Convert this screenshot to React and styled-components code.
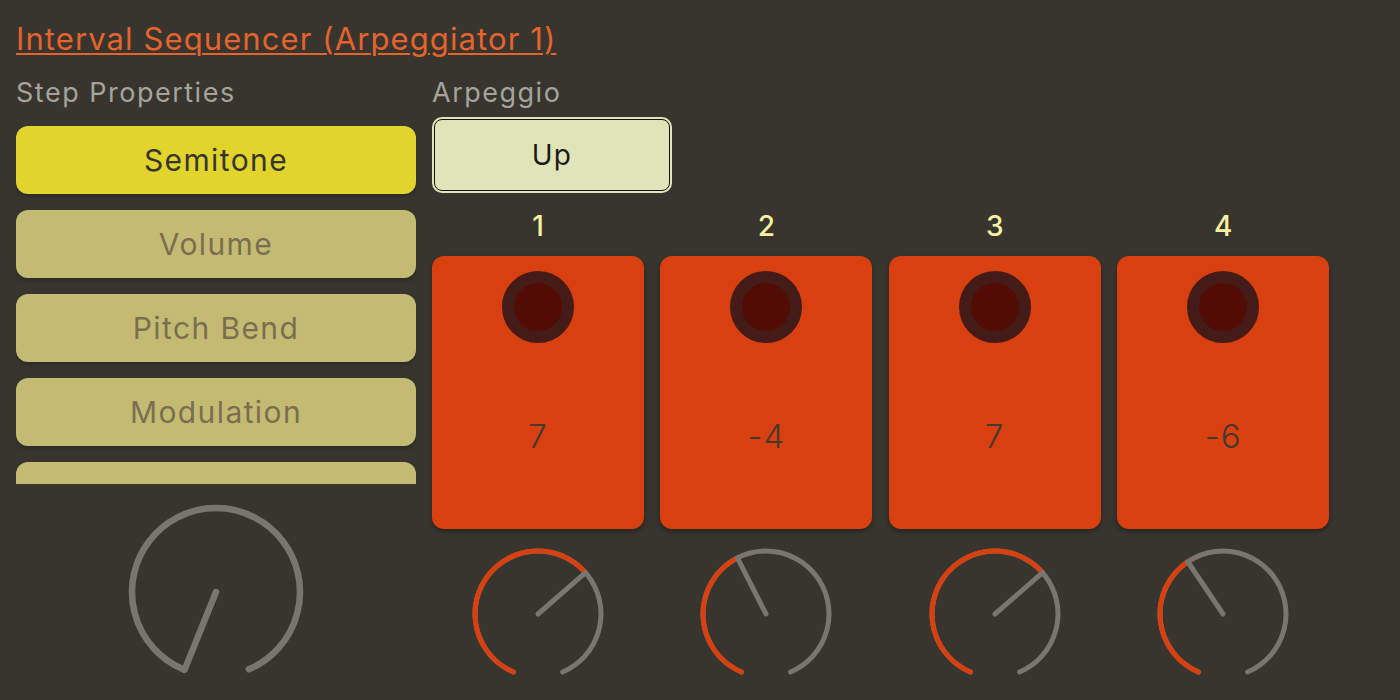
import React from 'react';
import styled, { createGlobalStyle } from 'styled-components';

const GlobalStyle = createGlobalStyle`
  html, body {
    margin: 0;
    padding: 0;
    background: #37352e;
  }
  body {
    font-family: Inter, "Noto Sans", "Liberation Sans", sans-serif;
  }
`;

const Page = styled.div`
  width: 1400px;
  height: 700px;
  box-sizing: border-box;
  padding: 21px 16px 0 16px;
  overflow: hidden;
  background: #37352e;
`;

const Title = styled.a`
  display: inline-block;
  font-size: 31px;
  line-height: 36px;
  letter-spacing: 1.1px;
  color: #e5632c;
  text-decoration: underline;
  text-decoration-thickness: 2px;
  text-underline-offset: 3px;
  cursor: pointer;
`;

const Columns = styled.div`
  display: grid;
  grid-template-columns: 400px 1fr;
  column-gap: 16px;
  margin-top: 20px;
`;

const Column = styled.div`
  display: flex;
  flex-direction: column;
`;

const Label = styled.div`
  font-size: 27px;
  line-height: 32px;
  letter-spacing: 1.5px;
  color: #a4a49c;
  margin-bottom: ${({ gap }) => gap}px;
`;

const PropertyList = styled.div`
  display: flex;
  flex-direction: column;
  gap: 16px;
  height: 358px;
  overflow: hidden;
`;

const PropertyButton = styled.div`
  flex: 0 0 68px;
  display: flex;
  align-items: center;
  justify-content: center;
  border-radius: 12px;
  font-size: 30px;
  letter-spacing: 1.4px;
  background: ${({ active }) => (active ? '#e1d42d' : '#c3bb72')};
  color: ${({ active }) => (active ? '#37352c' : '#7b6e50')};
  box-shadow: 0 2px 4px rgba(0, 0, 0, 0.25);
`;

const BigKnobWrap = styled.div`
  display: flex;
  justify-content: center;
  margin-top: 18px;
`;

const ModeButton = styled.div`
  width: 234px;
  height: 70px;
  margin: 2px 0 0 2px;
  display: flex;
  align-items: center;
  justify-content: center;
  background: #e1e4b9;
  border: 1px solid #15130f;
  border-radius: 8px;
  box-shadow: 0 0 0 2px #e1e4b9;
  font-size: 28px;
  letter-spacing: 1.2px;
  color: #1c1a16;
`;

const Steps = styled.div`
  display: grid;
  grid-template-columns: repeat(4, 212px);
  column-gap: 16.4px;
  margin-top: 18px;
`;

const Step = styled.div`
  display: flex;
  flex-direction: column;
  align-items: center;
`;

const StepNumber = styled.div`
  font-size: 28px;
  line-height: 34px;
  font-weight: 500;
  color: #f6f0a0;
  margin-bottom: 13px;
`;

const StepCard = styled.div`
  width: 212px;
  height: 273px;
  box-sizing: border-box;
  padding-top: 15px;
  border-radius: 12px;
  background: #d9400f;
  box-shadow: 0 3px 5px rgba(0, 0, 0, 0.3);
  display: flex;
  flex-direction: column;
  align-items: center;
`;

const Lamp = styled.div`
  width: 48px;
  height: 48px;
  border: 12px solid #451b17;
  border-radius: 50%;
  background: #520c04;
`;

const StepValue = styled.div`
  flex: 1;
  display: flex;
  align-items: center;
  justify-content: center;
  font-size: 33px;
  font-weight: 300;
  letter-spacing: 1px;
  color: #45382e;
`;

const KnobWrap = styled.div`
  margin-top: 15px;
  line-height: 0;
`;

const MIN = -157;
const MAX = 157;

function point(c, r, deg) {
  const rad = (deg * Math.PI) / 180;
  return [c + r * Math.sin(rad), c - r * Math.cos(rad)];
}

function arc(c, r, from, to) {
  const [x1, y1] = point(c, r, from);
  const [x2, y2] = point(c, r, to);
  const large = to - from > 180 ? 1 : 0;
  return `M ${x1} ${y1} A ${r} ${r} 0 ${large} 1 ${x2} ${y2}`;
}

function Knob({ size, radius, stroke, angle, showValue }) {
  const c = size / 2;
  const [px, py] = point(c, radius, angle);
  return (
    <svg width={size} height={size} viewBox={`0 0 ${size} ${size}`}>
      <path d={arc(c, radius, MIN, MAX)} fill="none" stroke="#78776f" strokeWidth={stroke} strokeLinecap="round" />
      {showValue && angle > MIN ? (
        <path d={arc(c, radius, MIN, angle)} fill="none" stroke="#d9400f" strokeWidth={stroke} strokeLinecap="round" />
      ) : null}
      <line x1={c} y1={c} x2={px} y2={py} stroke="#78776f" strokeWidth={stroke} strokeLinecap="round" />
    </svg>
  );
}

const properties = ['Semitone', 'Volume', 'Pitch Bend', 'Modulation', 'Velocity'];

const steps = [
  { id: 1, value: '7', angle: 49 },
  { id: 2, value: '-4', angle: -27 },
  { id: 3, value: '7', angle: 49 },
  { id: 4, value: '-6', angle: -34 },
];

export default function App() {
  return (
    <Page>
      <GlobalStyle />
      <Title>Interval Sequencer (Arpeggiator 1)</Title>
      <Columns>
        <Column>
          <Label gap={17}>Step Properties</Label>
          <PropertyList>
            {properties.map((name, i) => (
              <PropertyButton key={name} active={i === 0}>
                {name}
              </PropertyButton>
            ))}
          </PropertyList>
          <BigKnobWrap>
            <Knob size={180} radius={84} stroke={6.5} angle={-158} />
          </BigKnobWrap>
        </Column>
        <Column>
          <Label gap={8}>Arpeggio</Label>
          <div>
            <ModeButton>Up</ModeButton>
          </div>
          <Steps>
            {steps.map((step) => (
              <Step key={step.id}>
                <StepNumber>{step.id}</StepNumber>
                <StepCard>
                  <Lamp />
                  <StepValue>{step.value}</StepValue>
                </StepCard>
                <KnobWrap>
                  <Knob size={140} radius={63} stroke={5} angle={step.angle} showValue />
                </KnobWrap>
              </Step>
            ))}
          </Steps>
        </Column>
      </Columns>
    </Page>
  );
}
